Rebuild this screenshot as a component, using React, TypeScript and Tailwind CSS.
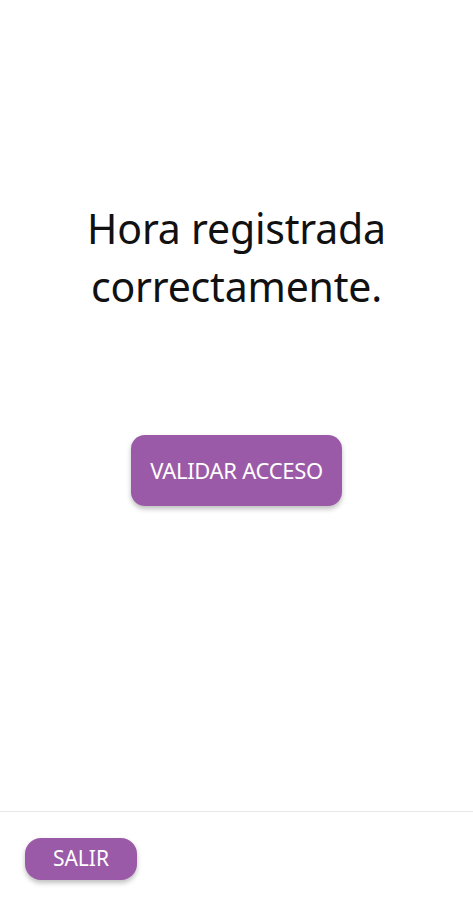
export default function App() {
  return (
    <div
      className="flex h-[900px] w-full flex-col bg-white"
      style={{ fontFamily: '"Noto Sans", "Open Sans", sans-serif' }}
    >
      {/* Content */}
      <main className="flex flex-1 flex-col items-center">
        <h1 className="mt-[199px] text-center text-[41px] font-normal leading-[58px] tracking-[-0.2px] text-[#111]">
          Hora registrada
          <br />
          correctamente.
        </h1>
        <button className="mt-[120px] h-[71px] w-[211px] rounded-[14px] bg-[#9b5aa8] text-[22px] tracking-[-0.3px] text-white shadow-[0_3px_5px_rgba(0,0,0,0.25)]">
          VALIDAR ACCESO
        </button>
      </main>

      {/* Footer */}
      <footer className="h-[89px] border-t border-[#e8e8e8] px-[25px] pt-[26px]">
        <button className="h-[42px] w-[112px] rounded-[16px] bg-[#9b5aa8] text-[21px] text-white shadow-[0_3px_5px_rgba(0,0,0,0.25)]">
          SALIR
        </button>
      </footer>
    </div>
  );
}
